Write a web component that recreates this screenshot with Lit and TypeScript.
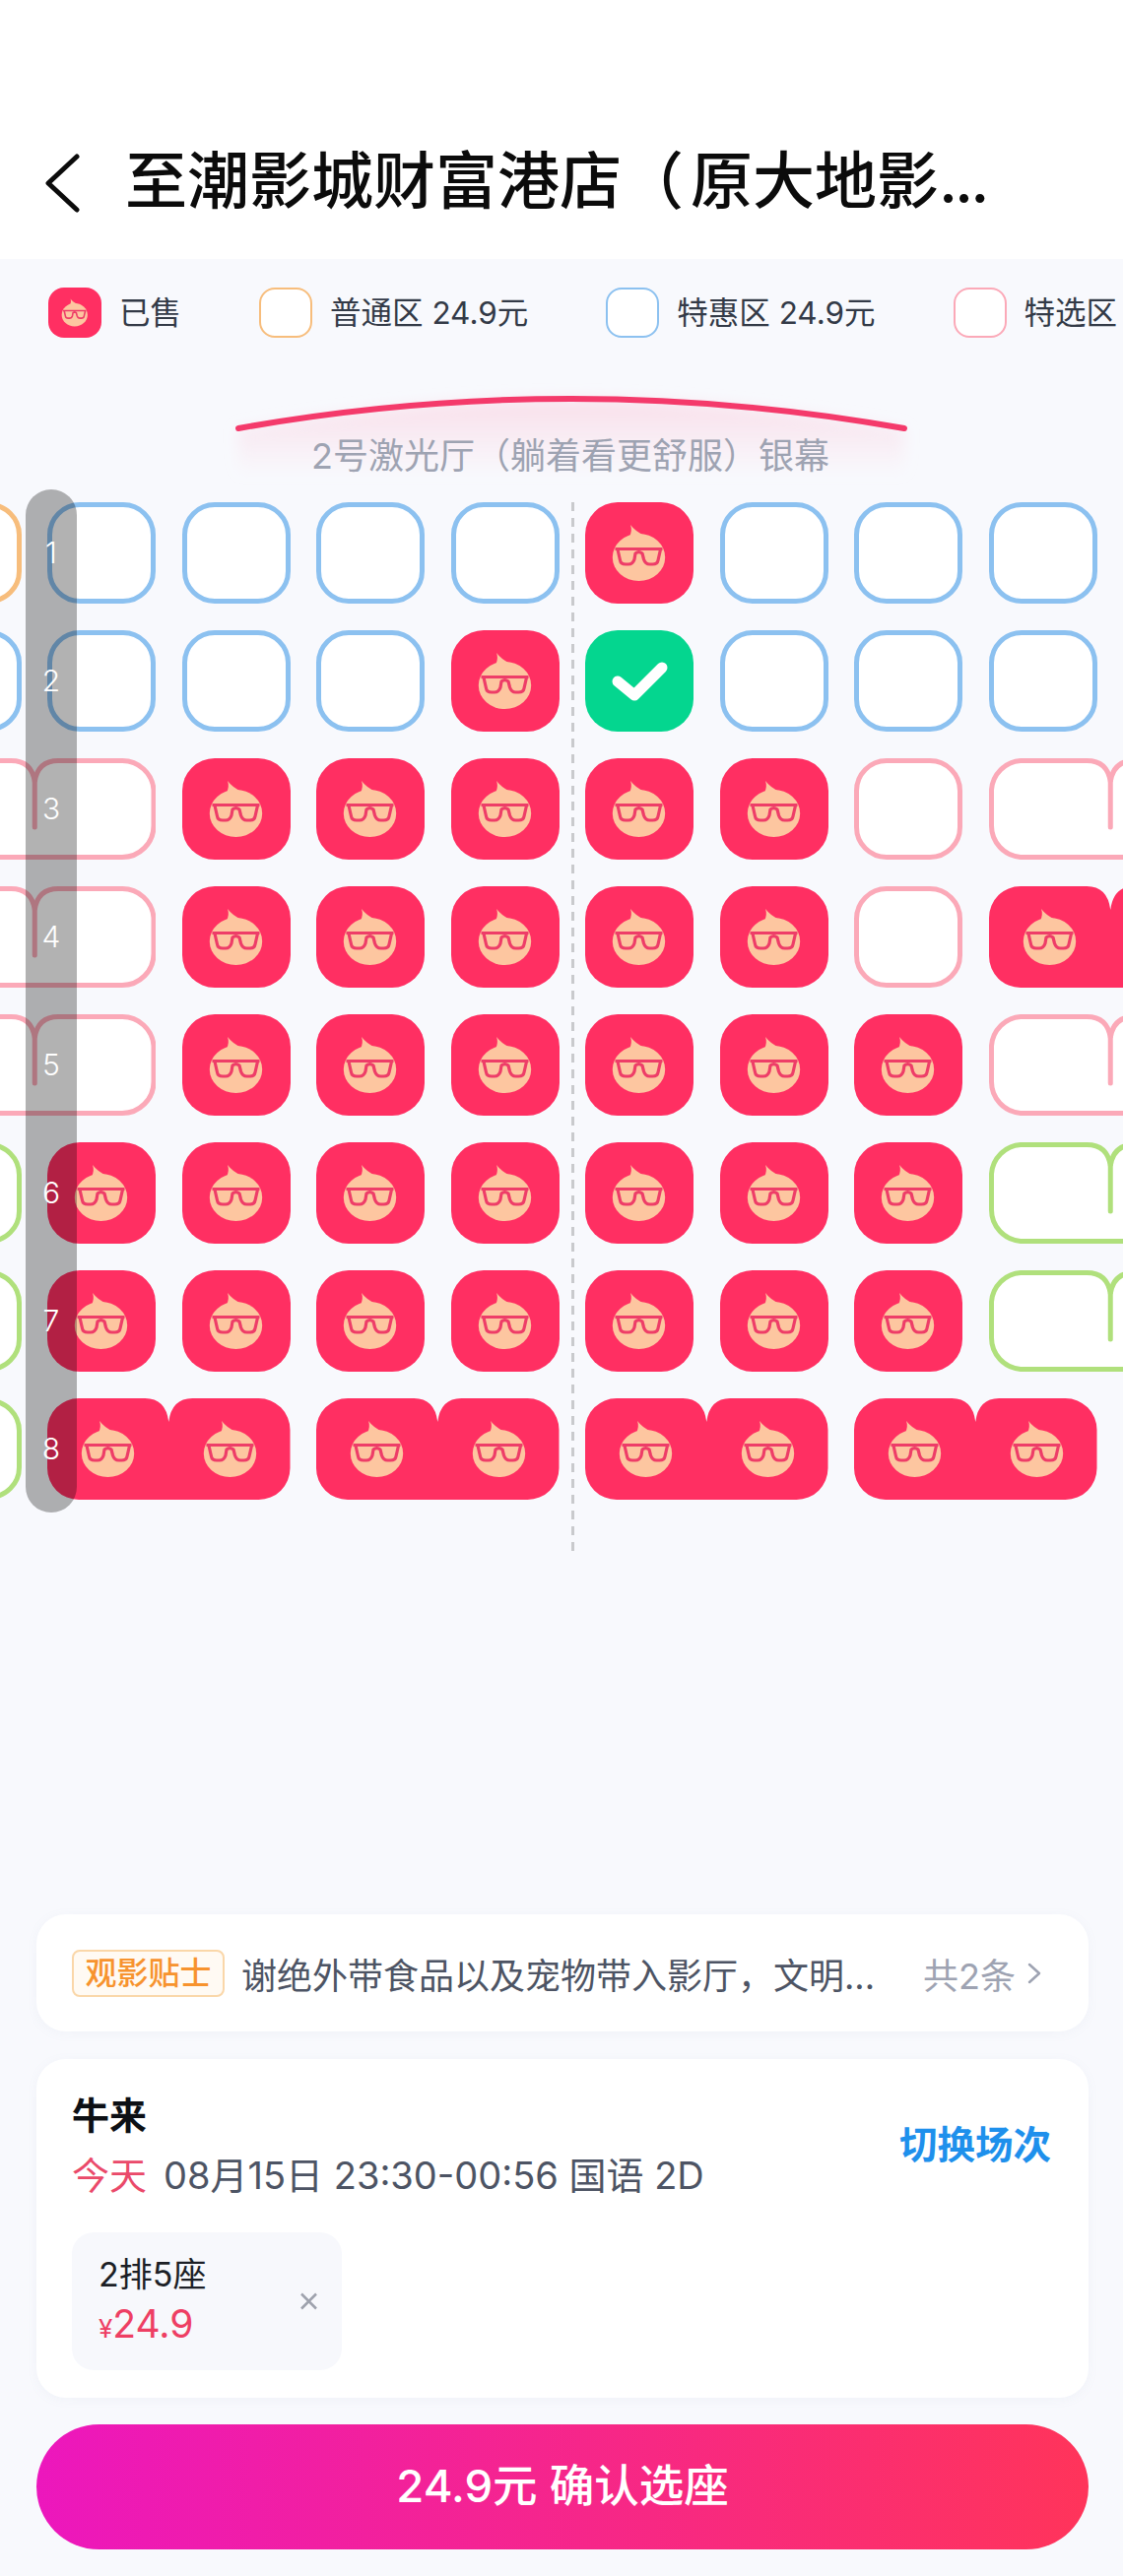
import { LitElement, html, css, svg } from "lit";
import { customElement } from "lit/decorators.js";

// o/b/p/g = empty seats by zone, s = sold, c = picked, capitals = couple seats
const ROWS = [
  "o b b b b s b b b",
  "b b b b s c b b b",
  "P s s s s s p P",
  "P s s s s s p S",
  "P s s s s s s P",
  "g s s s s s s s G",
  "g s s s s s s s G",
  "g S S S S",
];

const LEGEND = [
  { kind: "s", label: "已售" },
  { kind: "o", label: "普通区 24.9元" },
  { kind: "b", label: "特惠区 24.9元" },
  { kind: "p", label: "特选区" },
];

const PAIR_W = 246.5;
const PAIR_H = 103;
const MID = PAIR_W / 2;

function face(dx = 0) {
  return svg`<g transform="translate(${dx} 0)">
    <path class="skin" d="M45 35C47 31 47.500 27 46 23C49 27 54 31 61 34.500Z" />
    <ellipse class="skin" cx="54.5" cy="56" rx="26.7" ry="24" />
    <path class="specs" d="M30.500 47.500H78.500M33 48L35.500 59C36 62 38 63 41 63H44C47 63 49 61 50 58L51 52C53 50.500 56 50.500 58 52L59.500 58C60.500 61 62.500 63 65.500 63H68.500C71.500 63 73.500 62 74 59L76.500 48" />
  </g>`;
}

function pairOutline(inset: number) {
  const r = 32;
  const w = PAIR_W - inset;
  const h = PAIR_H - inset;
  return `M${r} ${inset}H${MID - 24}Q${MID - 3} ${inset} ${MID} 24Q${MID + 3} ${inset} ${MID + 24} ${inset}H${w - r}A${r} ${r} 0 0 1 ${w} ${r}V${h - r}A${r} ${r} 0 0 1 ${w - r} ${h}H${r}A${r} ${r} 0 0 1 ${inset} ${h - r}V${r}A${r} ${r} 0 0 1 ${r} ${inset}Z`;
}

@customElement("app-root")
export class AppRoot extends LitElement {
  static styles = css`
    :host {
      display: flex;
      flex-direction: column;
      width: 1140px;
      height: 2616px;
      overflow: hidden;
      background: #f8f9fd;
      font-family: Inter, "Noto Sans CJK SC", sans-serif;
      color: #333a47;
    }

    .header {
      flex: none;
      height: 263px;
      box-sizing: border-box;
      padding: 140px 0 0 45px;
      background: #fff;
      display: flex;
      align-items: flex-start;
    }
    .back {
      flex: none;
      width: 36px;
      height: 60px;
      margin-top: 16px;
    }
    .title {
      margin-left: 46px;
      font-size: 63px;
      line-height: 86px;
      font-weight: 500;
      color: #0b0b0b;
      white-space: nowrap;
    }
    .title .paren {
      margin-right: 7px;
    }
    .title .dots {
      letter-spacing: -3px;
    }

    .legend {
      flex: none;
      display: flex;
      align-items: center;
      gap: 79px;
      height: 51px;
      margin-top: 29px;
      padding-left: 49px;
      white-space: nowrap;
    }
    .legend-item {
      flex: none;
      display: flex;
      align-items: center;
      gap: 18px;
      font-size: 31.500px;
      line-height: 51px;
    }
    .legend .seat {
      width: 54px;
      height: 51px;
      border-radius: 16px;
      border-width: 2.500px;
    }
    .legend .seat svg {
      width: 54px;
      height: 51px;
    }

    .screen {
      flex: none;
      position: relative;
      height: 167px;
    }
    .screen svg {
      position: absolute;
      left: 200px;
      top: 30px;
    }
    .screen-name {
      position: relative;
      padding-top: 95px;
      margin-left: 316px;
      font-size: 36px;
      line-height: 50px;
      color: #9ea3b2;
      white-space: nowrap;
    }

    .map {
      flex: none;
      position: relative;
      display: flex;
      flex-direction: column;
      gap: 27px;
    }
    .row {
      display: flex;
      gap: 26.500px;
      margin-left: -88.500px;
    }
    .seat {
      flex: none;
      display: flex;
      align-items: center;
      justify-content: center;
      box-sizing: border-box;
      width: 110px;
      height: 103px;
      border: 5px solid transparent;
      border-radius: 33px;
      background: #fff;
    }
    .seat svg {
      flex: none;
      display: block;
      width: 110px;
      height: 103px;
    }
    .seat.o { border-color: #f7bd7c; }
    .seat.b { border-color: #8cc1f0; }
    .seat.p { border-color: #fba9b8; }
    .seat.g { border-color: #b0e07c; }
    .seat.s { background: #ff2f62; border: none; }
    .seat.c { background: #04d68f; border: none; }
    .check {
      fill: none;
      stroke: #fff;
      stroke-width: 11;
      stroke-linecap: round;
      stroke-linejoin: round;
    }
    .skin { fill: #fdc6a0; }
    .specs {
      fill: none;
      stroke: #ee3d68;
      stroke-width: 3.200;
      stroke-linejoin: round;
    }

    .pair {
      flex: none;
      display: block;
      width: 246.500px;
      height: 103px;
    }
    .pair .shell {
      fill: #fff;
      stroke-width: 5;
    }
    .pair .seam {
      fill: none;
      stroke-width: 5;
      stroke-linecap: round;
    }
    .pair.P .shell, .pair.P .seam { stroke: #fba9b8; }
    .pair.G .shell, .pair.G .seam { stroke: #b0e07c; }
    .pair.S .shell { fill: #ff2f62; stroke: none; }

    .aisle {
      position: absolute;
      left: 580px;
      top: 0;
      bottom: -57px;
      width: 3px;
      background: repeating-linear-gradient(to bottom, #c9cacd 0 9px, transparent 9px 16px);
    }
    .row-bar {
      position: absolute;
      left: 26px;
      top: -13px;
      width: 52px;
      box-sizing: border-box;
      padding: 13px 0;
      display: flex;
      flex-direction: column;
      gap: 27px;
      border-radius: 26px;
      background: rgba(0, 0, 0, 0.3);
      color: #fff;
      font-size: 30px;
      font-weight: 300;
      text-align: center;
    }
    .row-bar span {
      height: 103px;
      line-height: 102px;
    }

    .footer {
      margin-top: auto;
      flex: none;
      display: flex;
      flex-direction: column;
      padding: 0 35px 27px 37px;
    }
    .card {
      background: #fff;
      border-radius: 30px;
      box-shadow: 0 2px 12px rgba(120, 130, 170, 0.06);
    }
    .tips {
      display: flex;
      align-items: center;
      height: 119px;
      padding: 0 48px 0 36px;
      white-space: nowrap;
    }
    .tag {
      flex: none;
      box-sizing: border-box;
      width: 155px;
      height: 48px;
      border: 2px solid #fad7a9;
      border-radius: 8px;
      background: #fffaf3;
      color: #f7932e;
      font-size: 32px;
      font-weight: 500;
      line-height: 44px;
      text-align: center;
    }
    .tip-text {
      margin-left: 17px;
      font-size: 36px;
      color: #4d5464;
    }
    .tip-count {
      margin-left: auto;
      font-size: 36px;
      color: #9ea3b2;
    }
    .tip-arrow {
      flex: none;
      width: 14px;
      height: 22px;
      margin-left: 12px;
    }

    .show {
      position: relative;
      height: 344px;
      box-sizing: border-box;
      margin-top: 28px;
      padding: 27px 38px 0 36px;
    }
    .show-head {
      display: flex;
      align-items: center;
      justify-content: space-between;
    }
    .movie {
      font-size: 38px;
      line-height: 60px;
      font-weight: 700;
      color: #0d1015;
    }
    .time {
      font-size: 38px;
      line-height: 62px;
      color: #4d5464;
      white-space: nowrap;
    }
    .time em {
      font-style: normal;
      color: #ea4a6a;
      margin-right: 17px;
    }
    .switch {
      margin-bottom: 8px;
      font-size: 38.500px;
      font-weight: 700;
      color: #1e90ec;
      white-space: nowrap;
    }
    .chip {
      display: flex;
      align-items: center;
      justify-content: space-between;
      box-sizing: border-box;
      width: 274px;
      height: 140px;
      margin-top: 27px;
      padding: 0 24px 0 27px;
      border-radius: 22px;
      background: #f7f8fc;
    }
    .chip-name {
      font-size: 34px;
      line-height: 48px;
      color: #1c1f26;
    }
    .chip-price {
      margin-top: 2px;
      font-size: 39px;
      line-height: 48px;
      color: #ee3f64;
    }
    .chip-price small {
      font-size: 26px;
    }
    .chip-x {
      flex: none;
      width: 19px;
      height: 18px;
    }

    .confirm {
      height: 127px;
      margin-top: 27px;
      border-radius: 64px;
      background: linear-gradient(90deg, #ec17bd 0%, #ff345a 100%);
      color: #fff;
      font-size: 45.500px;
      font-weight: 500;
      line-height: 125px;
      text-align: center;
      white-space: pre;
    }
  `;

  private renderSeat(kind: string) {
    if (kind === "P" || kind === "G" || kind === "S") {
      const inset = kind === "S" ? 0 : 2.5;
      return html`<svg class="pair ${kind}" viewBox="0 0 ${PAIR_W} ${PAIR_H}">
        <path class="shell" d=${pairOutline(inset)} />
        ${kind === "S"
          ? [face(7), face(131)]
          : svg`<path class="seam" d="M${MID} 24V70" />`}
      </svg>`;
    }
    return html`<div class="seat ${kind}">
      ${kind === "s" ? html`<svg viewBox="0 0 110 103">${face()}</svg>` : ""}
      ${kind === "c"
        ? html`<svg viewBox="0 0 110 103"><path class="check" d="M33 52L50 66L78 38" /></svg>`
        : ""}
    </div>`;
  }

  render() {
    return html`
      <div class="header">
        <svg class="back" viewBox="0 0 36 60">
          <path d="M33 3L4 30L33 57" fill="none" stroke="#0b0b0b" stroke-width="5" stroke-linecap="round" stroke-linejoin="round" />
        </svg>
        <div class="title">至潮影城财富港店<span class="paren">（</span>原大地影<span class="dots">...</span></div>
      </div>

      <div class="legend">
        ${LEGEND.map(
          (item) => html`<div class="legend-item">${this.renderSeat(item.kind)}<span>${item.label}</span></div>`
        )}
      </div>

      <div class="screen">
        <svg width="760" height="150" viewBox="0 0 760 150">
          <defs>
            <linearGradient id="glow" x1="0" y1="0" x2="0" y2="1">
              <stop offset="0" stop-color="#f9dfea" />
              <stop offset="1" stop-color="#f9dfea" stop-opacity="0" />
            </linearGradient>
            <filter id="soft" x="-10%" y="-30%" width="120%" height="160%">
              <feGaussianBlur stdDeviation="7" />
            </filter>
          </defs>
          <path d="M42 63Q380 2 718 63V110H42Z" fill="url(#glow)" filter="url(#soft)" />
          <path d="M42 62Q380 2 718 62" fill="none" stroke="#f43a6b" stroke-width="6" stroke-linecap="round" />
        </svg>
        <div class="screen-name">2号激光厅（躺着看更舒服）银幕</div>
      </div>

      <div class="map">
        ${ROWS.map(
          (row) => html`<div class="row">${row.split(" ").map((kind) => this.renderSeat(kind))}</div>`
        )}
        <div class="aisle"></div>
        <div class="row-bar">
          ${ROWS.map((_, i) => html`<span>${i + 1}</span>`)}
        </div>
      </div>

      <div class="footer">
        <div class="card tips">
          <span class="tag">观影贴士</span>
          <span class="tip-text">谢绝外带食品以及宠物带入影厅，文明...</span>
          <span class="tip-count">共2条</span>
          <svg class="tip-arrow" viewBox="0 0 14 22">
            <path d="M2 2L12 11L2 20" fill="none" stroke="#9ea3b2" stroke-width="2.500" stroke-linecap="round" stroke-linejoin="round" />
          </svg>
        </div>

        <div class="card show">
          <div class="show-head">
            <div>
              <div class="movie">牛来</div>
              <div class="time"><em>今天</em>08月15日 23:30-00:56 国语 2D</div>
            </div>
            <div class="switch">切换场次</div>
          </div>
          <div class="chip">
            <div>
              <div class="chip-name">2排5座</div>
              <div class="chip-price"><small>¥</small>24.9</div>
            </div>
            <svg class="chip-x" viewBox="0 0 19 18">
              <path d="M2 1.500L17 16.500M17 1.500L2 16.500" fill="none" stroke="#9ea2ad" stroke-width="2.500" />
            </svg>
          </div>
        </div>

        <div class="confirm">24.9元 确认选座</div>
      </div>
    `;
  }
}
